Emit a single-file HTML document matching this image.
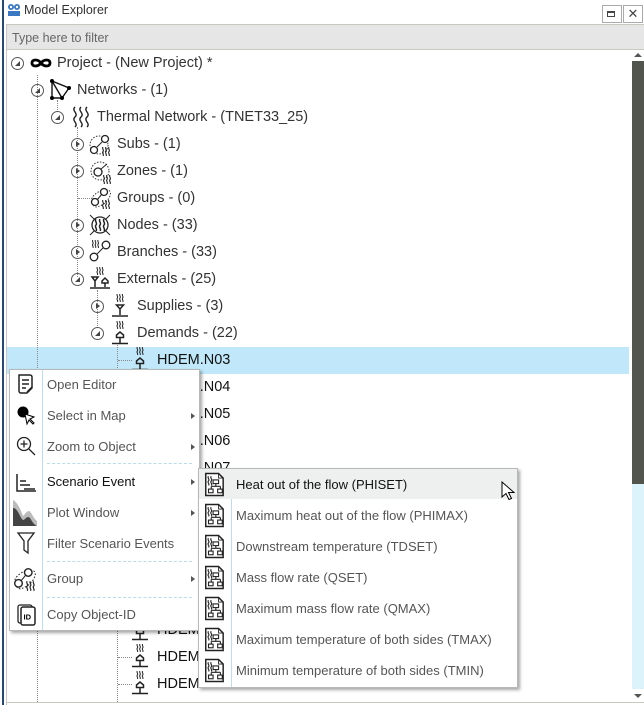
<!DOCTYPE html>
<html><head><meta charset="utf-8">
<style>
*{box-sizing:border-box;margin:0;padding:0}
body{width:644px;height:705px;overflow:hidden;background:#fff;font-family:"Liberation Sans",sans-serif;position:relative}
.a{position:absolute}
.t{position:absolute;font-size:14.5px;color:#333;white-space:nowrap;line-height:18px}
.exp{position:absolute;width:13px;height:13px;border:1px solid #555;border-radius:50%}
.exp:after{content:"";position:absolute;left:3px;top:3px;border:0}
.open:after{left:3px;top:3px;width:0;height:0;border-left:5px solid transparent;border-bottom:5px solid #444}
.closed:after{left:4px;top:2px;width:0;height:0;border-top:3.5px solid transparent;border-bottom:3.5px solid transparent;border-left:4px solid #444}
.vl{position:absolute;border-left:1px dotted #888;width:0}
.hl{position:absolute;border-top:1px dotted #888;height:0}
.mi{position:absolute;left:47px;font-size:13px;color:#555;white-space:nowrap}
.si{position:absolute;left:236px;font-size:13px;color:#555;white-space:nowrap}
.arr{position:absolute;left:191px;width:0;height:0;border-top:3px solid transparent;border-bottom:3px solid transparent;border-left:4px solid #555}
.sep{position:absolute;left:47px;width:145px;border-top:1px dashed #b9dcec}
svg{position:absolute;overflow:visible}
</style></head><body>
<svg width="0" height="0" style="position:absolute">
<defs>
<symbol id="wav" viewBox="0 0 12 12"><path d="M2 0c-2 2 2 4 0 6s2 4 0 6M6 0c-2 2 2 4 0 6s2 4 0 6M10 0c-2 2 2 4 0 6s2 4 0 6" fill="none" stroke="#222" stroke-width="1.5"/></symbol>
<symbol id="hdem" viewBox="0 0 20 26"><use href="#wav" x="6" y="0" width="8" height="8"/><path d="M6.5 14l3.5-3 3.5 3v2.5h-7z M10 16.5v6 M2 22.5h16" fill="none" stroke="#222" stroke-width="1.5"/></symbol>
<symbol id="sev" viewBox="0 0 24 26"><path d="M3 1h14l5 5v19H3z" fill="#fff" stroke="#222" stroke-width="1.6"/><path d="M17 1v5h5" fill="none" stroke="#222"/><path d="M6 4c-2 2 2 3 0 5s2 3 0 5M9 4c-2 2 2 3 0 5s2 3 0 5" fill="none" stroke="#222" stroke-width="1.2"/><rect x="11" y="8" width="6" height="4" fill="none" stroke="#222" stroke-width="1.2"/><path d="M14 12v3M9 15h10M9 15v3M19 15v3" stroke="#222" fill="none" stroke-width="1.2"/><rect x="6" y="18" width="5" height="4" fill="none" stroke="#222" stroke-width="1.2"/><rect x="16" y="18" width="5" height="4" fill="none" stroke="#222" stroke-width="1.2"/></symbol>
</defs></svg>

<div class="a" style="left:0;top:0;width:644px;height:23px;background:#fff"></div>
<svg style="left:7px;top:3px" width="14" height="14" viewBox="0 0 14 14"><circle cx="4" cy="4" r="3" fill="#3a78c4"/><circle cx="10" cy="4" r="3" fill="#3a78c4"/><circle cx="4" cy="4" r="1.2" fill="#fff"/><circle cx="10" cy="4" r="1.2" fill="#fff"/><rect x="1" y="8" width="12" height="5" fill="#3a78c4"/></svg>
<div class="a" style="left:24px;top:3px;font-size:12.5px;color:#333">Model Explorer</div>
<div class="a" style="left:602px;top:5px;width:20px;height:18px;border:1px solid #aaa"></div>
<div class="a" style="left:607px;top:11px;width:8px;height:6px;border:1px solid #444;border-top-width:2px"></div>
<div class="a" style="left:623px;top:5px;width:20px;height:18px;border:1px solid #aaa;font-size:13px;text-align:center;line-height:16px;color:#444">✕</div>
<div class="a" style="left:2px;top:0;width:2px;height:705px;background:#274a72"></div>
<div class="a" style="left:6px;top:24px;width:638px;height:26px;background:#e6e6e6;border-top:1px solid #c8c8c0;border-bottom:1px solid #c8c8c0;border-left:1px solid #c8c8c0"></div>
<div class="a" style="left:12px;top:31px;font-size:12.5px;color:#666">Type here to filter</div>
<div class="a" style="left:6px;top:50px;width:1px;height:655px;background:#c8c8c0"></div>
<div class="a" style="left:6px;top:702px;width:638px;height:1px;background:#c8c8c0"></div>

<div class="a" style="left:7px;top:347px;width:622px;height:27px;background:#c0e8fa"></div>

<div class="vl" style="left:37px;top:75px;height:627px"></div>
<div class="vl" style="left:57px;top:100px;height:12px"></div>
<div class="vl" style="left:77px;top:127px;height:150px"></div>
<div class="hl" style="left:78px;top:198px;width:12px"></div>
<div class="vl" style="left:97px;top:290px;height:38px"></div>
<div class="vl" style="left:117px;top:345px;height:357px"></div>
<div class="hl" style="left:118px;top:360px;width:14px"></div>
<div class="hl" style="left:118px;top:657px;width:14px"></div>
<div class="hl" style="left:118px;top:684px;width:14px"></div>

<div class="exp open" style="left:11px;top:57px"></div>
<svg style="left:29px;top:57px" width="24" height="12" viewBox="0 0 24 12"><path d="M12 6c-3-4-9-4-9 0s6 4 9 0c3-4 9-4 9 0s-6 4-9 0z" fill="none" stroke="#000" stroke-width="2.8"/></svg>
<div class="t" style="left:57px;top:54px">Project - (New Project) *</div>

<div class="exp open" style="left:31px;top:84px"></div>
<svg style="left:50px;top:79px" width="22" height="22" viewBox="0 0 22 22"><path d="M2 2L19 9L12 19H2z M2 2L12 19" fill="none" stroke="#111" stroke-width="1.4"/><circle cx="2" cy="2" r="2" fill="#000"/><circle cx="19" cy="9" r="2" fill="#000"/><circle cx="12" cy="19" r="2" fill="#000"/><circle cx="2" cy="19" r="2" fill="#000"/></svg>
<div class="t" style="left:77px;top:81px">Networks - (1)</div>

<div class="exp open" style="left:51px;top:111px"></div>
<svg style="left:71px;top:106px" width="20" height="22" viewBox="0 0 20 22"><path d="M4 1c-4 4 4 6 0 10s4 6 0 10M10 1c-4 4 4 6 0 10s4 6 0 10M16 1c-4 4 4 6 0 10s4 6 0 10" fill="none" stroke="#222" stroke-width="1.4"/></svg>
<div class="t" style="left:97px;top:108px">Thermal Network - (TNET33_25)</div>

<div class="exp closed" style="left:71px;top:138px"></div>
<svg style="left:89px;top:134px" width="24" height="22" viewBox="0 0 24 22"><circle cx="10" cy="11" r="9" fill="none" stroke="#333" stroke-dasharray="1.5 1.5"/><circle cx="16" cy="5" r="3.5" fill="#fff" stroke="#222" stroke-width="1.3"/><circle cx="5" cy="16" r="3.5" fill="#fff" stroke="#222" stroke-width="1.3"/><path d="M8 13L13 8" stroke="#222"/><use href="#wav" x="12" y="13" width="10" height="9"/></svg>
<div class="t" style="left:117px;top:135px">Subs - (1)</div>

<div class="exp closed" style="left:71px;top:165px"></div>
<svg style="left:89px;top:161px" width="24" height="22" viewBox="0 0 24 22"><circle cx="11" cy="10" r="9" fill="none" stroke="#333" stroke-dasharray="1.5 1.5"/><circle cx="9" cy="11" r="4" fill="#fff" stroke="#222" stroke-width="1.3"/><path d="M12 8L18 3" stroke="#222"/><use href="#wav" x="13" y="14" width="10" height="9"/></svg>
<div class="t" style="left:117px;top:162px">Zones - (1)</div>

<svg style="left:89px;top:187px" width="24" height="22" viewBox="0 0 24 22"><path d="M3 15c-3-6 10-14 16-12s0 12-6 15-8 3-10-3z" fill="none" stroke="#333" stroke-dasharray="1.5 1.5"/><circle cx="15" cy="5" r="3.5" fill="#fff" stroke="#222" stroke-width="1.3"/><circle cx="6" cy="15" r="3.5" fill="#fff" stroke="#222" stroke-width="1.3"/><path d="M8 13L13 7" stroke="#222"/><use href="#wav" x="12" y="13" width="10" height="9"/></svg>
<div class="t" style="left:117px;top:189px">Groups - (0)</div>

<div class="exp closed" style="left:71px;top:219px"></div>
<svg style="left:89px;top:214px" width="22" height="22" viewBox="0 0 22 22"><circle cx="11" cy="11" r="8" fill="none" stroke="#222" stroke-width="1.3"/><path d="M1 1L5 5M21 1L17 5M1 21L5 17M21 21L17 17" stroke="#222"/><use href="#wav" x="5" y="5" width="12" height="12"/></svg>
<div class="t" style="left:117px;top:216px">Nodes - (33)</div>

<div class="exp closed" style="left:71px;top:246px"></div>
<svg style="left:89px;top:240px" width="22" height="22" viewBox="0 0 22 22"><circle cx="17" cy="5" r="3.8" fill="none" stroke="#222" stroke-width="1.3"/><circle cx="5" cy="17" r="3.8" fill="none" stroke="#222" stroke-width="1.3"/><path d="M8 14L14 8" stroke="#222"/><use href="#wav" x="2" y="0" width="9" height="8"/></svg>
<div class="t" style="left:117px;top:243px">Branches - (33)</div>

<div class="exp open" style="left:71px;top:273px"></div>
<svg style="left:89px;top:267px" width="22" height="24" viewBox="0 0 22 24"><use href="#wav" x="7" y="0" width="8" height="8"/><path d="M3 10h6l-3 4z M13 14l3-3 3 3v2h-6z M6 14v6 M16 16v4 M1 21h20" fill="none" stroke="#222" stroke-width="1.5"/></svg>
<div class="t" style="left:117px;top:270px">Externals - (25)</div>

<div class="exp closed" style="left:91px;top:300px"></div>
<svg style="left:109px;top:294px" width="22" height="26" viewBox="0 0 20 26"><use href="#wav" x="6" y="0" width="8" height="8"/><path d="M6.5 11h7l-3.5 4z M10 15v6 M2 22h16" fill="none" stroke="#222" stroke-width="1.5"/></svg>
<div class="t" style="left:137px;top:297px">Supplies - (3)</div>

<div class="exp open" style="left:91px;top:327px"></div>
<svg style="left:109px;top:321px" width="22" height="26"><use href="#hdem" width="22" height="26"/></svg>
<div class="t" style="left:137px;top:324px">Demands - (22)</div>

<svg style="left:130px;top:347px" width="20" height="26"><use href="#hdem" width="20" height="26"/></svg>
<div class="t" style="left:157px;top:351px;color:#111">HDEM.N03</div>
<div class="t" style="left:157px;top:378px;color:#111">HDEM.N04</div>
<div class="t" style="left:157px;top:405px;color:#111">HDEM.N05</div>
<div class="t" style="left:157px;top:432px;color:#111">HDEM.N06</div>
<div class="t" style="left:157px;top:459px;color:#111">HDEM.N07</div>
<svg style="left:130px;top:617px" width="20" height="26"><use href="#hdem" width="20" height="26"/></svg>
<div class="t" style="left:157px;top:621px;color:#111">HDEM.N15</div>
<svg style="left:130px;top:644px" width="20" height="26"><use href="#hdem" width="20" height="26"/></svg>
<div class="t" style="left:157px;top:648px;color:#111">HDEM.N16</div>
<svg style="left:130px;top:671px" width="20" height="26"><use href="#hdem" width="20" height="26"/></svg>
<div class="t" style="left:157px;top:675px;color:#111">HDEM.N17</div>

<!-- scrollbar -->
<div class="a" style="left:630px;top:50px;width:14px;height:652px;background:#fff;z-index:5"></div>
<div class="a" style="left:634px;top:53px;width:0;height:0;border-left:4px solid transparent;border-right:4px solid transparent;border-bottom:4px solid #555;z-index:6"></div>
<div class="a" style="left:632px;top:61px;width:12px;height:423px;background:#52554e;z-index:6"></div>
<div class="a" style="left:632px;top:484px;width:12px;height:205px;background:#ddf3fb;z-index:6"></div>
<div class="a" style="left:634px;top:694px;width:0;height:0;border-left:4px solid transparent;border-right:4px solid transparent;border-top:4px solid #555;z-index:6"></div>

<!-- context menu -->
<div class="a" style="left:9px;top:369px;width:191px;height:262px;background:#fff;border:1px solid #b8b8b8;box-shadow:2px 2px 3px rgba(0,0,0,.35)"></div>
<div class="a" style="left:42px;top:370px;width:1px;height:260px;background:#b9e0f0"></div>
<svg style="left:17px;top:374px" width="18" height="20" viewBox="0 0 18 20"><path d="M2 1h11a2 2 0 0 1 2 2v11l-5 5H4a2 2 0 0 1-2-2z" fill="none" stroke="#222" stroke-width="1.5"/><path d="M5 6h7M5 10h7M5 14h4M10 18l5-5" stroke="#222" stroke-width="1.4"/></svg>
<div class="mi" style="top:377px">Open Editor</div>
<svg style="left:16px;top:405px" width="20" height="20" viewBox="0 0 20 20"><circle cx="7" cy="7" r="5.5" fill="#000"/><path d="M9 9l2 10 2-4 4 4 1-1-4-4 4-2z" fill="#fff" stroke="#000"/></svg>
<div class="mi" style="top:408px">Select in Map</div><div class="arr" style="top:413px"></div>
<svg style="left:16px;top:436px" width="20" height="20" viewBox="0 0 20 20"><circle cx="8" cy="8" r="6.5" fill="none" stroke="#222" stroke-width="1.3"/><path d="M8 4.5v7M4.5 8h7M13 13l6 6" stroke="#222" stroke-width="1.3"/></svg>
<div class="mi" style="top:439px">Zoom to Object</div><div class="arr" style="top:444px"></div>
<div class="sep" style="top:463px"></div>
<svg style="left:15px;top:473px" width="22" height="20" viewBox="0 0 22 20"><path d="M2 1v17h19M5 8h6M5 12h10M9 16h11" stroke="#222" stroke-width="1.5" fill="none"/></svg>
<div class="mi" style="top:474px;color:#111">Scenario Event</div><div class="arr" style="top:479px"></div>
<svg style="left:13px;top:500px" width="24" height="26" viewBox="0 0 24 26"><path d="M0 0v26h24v-5c-4-3-6-10-8-10s-4 3-6 5c-3-8-6-14-10-16z" fill="#bbb"/><path d="M0 8v18h24c-5-2-6-9-9-9-2 0-3 3-5 3-3-2-5-12-10-12z" fill="#444"/></svg>
<div class="mi" style="top:505px">Plot Window</div><div class="arr" style="top:510px"></div>
<svg style="left:17px;top:532px" width="18" height="22" viewBox="0 0 18 22"><path d="M1 1h16l-6 8v12l-4-3v-9z" fill="none" stroke="#222" stroke-width="1.3"/></svg>
<div class="mi" style="top:536px">Filter Scenario Events</div>
<div class="sep" style="top:561px"></div>
<svg style="left:12px;top:567px" width="26" height="24" viewBox="0 0 24 22"><path d="M3 15c-3-6 10-14 16-12s0 12-6 15-8 3-10-3z" fill="none" stroke="#333" stroke-dasharray="1.5 1.5"/><circle cx="15" cy="5" r="3.5" fill="#fff" stroke="#222" stroke-width="1.3"/><circle cx="6" cy="15" r="3.5" fill="#fff" stroke="#222" stroke-width="1.3"/><path d="M8 13L13 7" stroke="#222"/><use href="#wav" x="12" y="13" width="10" height="9"/></svg>
<div class="mi" style="top:571px">Group</div><div class="arr" style="top:576px"></div>
<div class="sep" style="top:597px"></div>
<svg style="left:17px;top:604px" width="20" height="22" viewBox="0 0 20 22"><rect x="1" y="1" width="14" height="18" rx="2" fill="#fff" stroke="#222" stroke-width="1.3"/><rect x="4" y="3" width="14" height="18" rx="2" fill="#fff" stroke="#222" stroke-width="1.5"/><text x="6.5" y="15.5" font-family="Liberation Sans" font-size="7.5" font-weight="bold">ID</text></svg>
<div class="mi" style="top:607px">Copy Object-ID</div>

<!-- submenu -->
<div class="a" style="left:198px;top:468px;width:320px;height:220px;background:#fff;border:1px solid #b8b8b8;box-shadow:2px 2px 3px rgba(0,0,0,.35);z-index:7"></div>
<div style="position:absolute;left:0;top:0;z-index:8">
<div class="a" style="left:199px;top:469px;width:318px;height:30px;background:#eef0ef"></div>
<div class="a" style="left:231px;top:499px;width:1px;height:188px;background:#b9e0f0"></div>
<svg style="left:203px;top:472px" width="22" height="25"><use href="#sev" width="22" height="25"/></svg>
<svg style="left:203px;top:503px" width="22" height="25"><use href="#sev" width="22" height="25"/></svg>
<svg style="left:203px;top:534px" width="22" height="25"><use href="#sev" width="22" height="25"/></svg>
<svg style="left:203px;top:565px" width="22" height="25"><use href="#sev" width="22" height="25"/></svg>
<svg style="left:203px;top:596px" width="22" height="25"><use href="#sev" width="22" height="25"/></svg>
<svg style="left:203px;top:627px" width="22" height="25"><use href="#sev" width="22" height="25"/></svg>
<svg style="left:203px;top:658px" width="22" height="25"><use href="#sev" width="22" height="25"/></svg>
<div class="si" style="top:477px;color:#111">Heat out of the flow (PHISET)</div>
<div class="si" style="top:508px">Maximum heat out of the flow (PHIMAX)</div>
<div class="si" style="top:539px">Downstream temperature (TDSET)</div>
<div class="si" style="top:570px">Mass flow rate (QSET)</div>
<div class="si" style="top:601px">Maximum mass flow rate (QMAX)</div>
<div class="si" style="top:632px">Maximum temperature of both sides (TMAX)</div>
<div class="si" style="top:663px">Minimum temperature of both sides (TMIN)</div>
<svg style="left:501px;top:481px" width="14" height="20" viewBox="0 0 14 20"><path d="M1 1v15l4-3.5 3 6 2.5-1-3-6h5.5z" fill="#fff" stroke="#000"/></svg>
</div>
</body></html>
